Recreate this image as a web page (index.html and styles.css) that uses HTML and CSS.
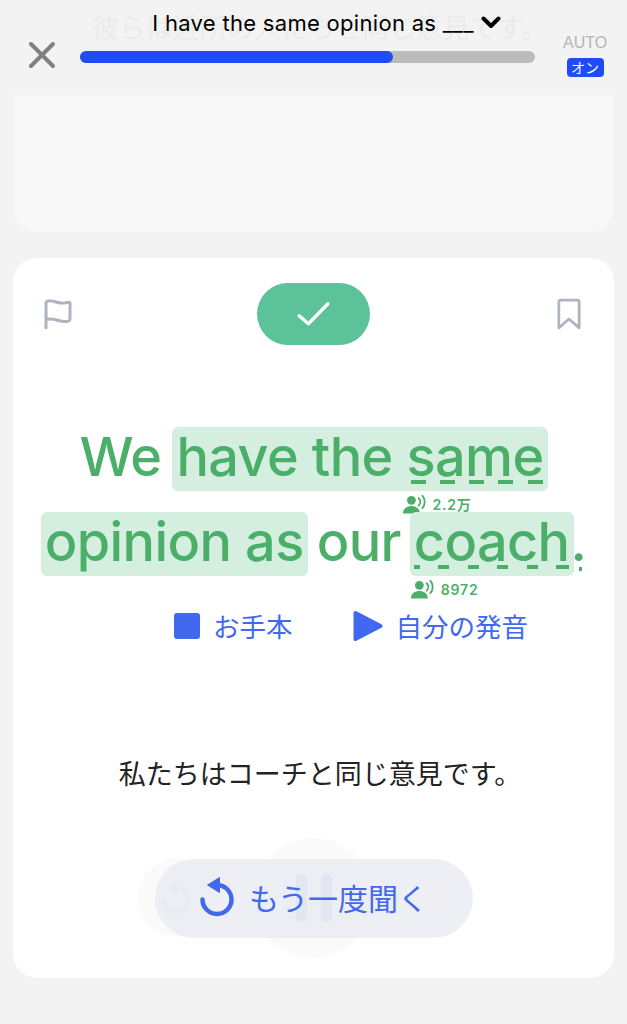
FILE: index.html
```html
<!DOCTYPE html>
<html lang="ja">
<head>
  <meta charset="UTF-8">
  <meta name="viewport" content="width=device-width, initial-scale=1.0">
  <title>Listening Lesson</title>
  <link rel="stylesheet" href="styles.css">
</head>
<body>
  <header class="top-bar">
    <p class="ghost-text">彼らは近所の人たちと同じ意見です。</p>
    <svg class="close-icon" viewBox="0 0 28 28" width="28" height="28">
      <path d="M3 3 L25 25 M25 3 L3 25" fill="none" stroke="#808080" stroke-width="4" stroke-linecap="round"/>
    </svg>
    <div class="progress-area">
      <div class="lesson-title">
        <span>I have the same opinion as ___</span>
        <svg viewBox="0 0 20 13" width="20" height="13">
          <path d="M2.5 2.5 L10 10 L17.5 2.5" fill="none" stroke="#000" stroke-width="4" stroke-linecap="round" stroke-linejoin="round"/>
        </svg>
      </div>
      <div class="progress-track"><div class="progress-fill"></div></div>
    </div>
    <div class="auto-toggle">
      <span class="auto-label">AUTO</span>
      <span class="auto-badge">オン</span>
    </div>
  </header>

  <section class="prev-card"></section>

  <main class="lesson-card">
    <div class="card-top">
      <svg viewBox="0 0 28 30" width="28" height="30">
        <path d="M2 29 V4 C2 2.5 3 2 4.5 2 C10 1 14 5 20 4 C22 3.8 26 2.5 26 4 V20 C26 22 24 22.5 21 22.5 C15 22.5 9 18.5 2 20.5" fill="none" stroke="#aeb4bf" stroke-width="3" stroke-linecap="round" stroke-linejoin="round"/>
      </svg>
      <div class="check-pill">
        <svg viewBox="0 0 38 28" width="36" height="26">
          <path d="M3 16 L13 24.5 L34 3" fill="none" stroke="#fff" stroke-width="3.6" stroke-linecap="round" stroke-linejoin="round"/>
        </svg>
      </div>
      <svg viewBox="0 0 26 34" width="24" height="32">
        <path d="M2 32 V4 C2 2.7 2.7 2 4 2 H22 C23.3 2 24 2.7 24 4 V32 L13 22.5 Z" fill="none" stroke="#aeb4bf" stroke-width="3" stroke-linejoin="round"/>
      </svg>
    </div>

    <div class="sentence">
      <div class="sentence-line">
        <span class="word-first">We</span>
        <span class="word-hl">have the <span class="word-scored">same
          <span class="dashes"><i></i><i></i><i></i><i></i><i></i></span>
          <span class="score score-same">
            <svg viewBox="0 0 22 18" width="23" height="19">
              <circle cx="8" cy="5" r="4.2" fill="#4caf69"/>
              <path d="M0 17.5 C0 12.5 4 10.5 8 10.5 C12 10.5 16 12.5 16 17.5 Z" fill="#4caf69"/>
              <path d="M15 3 C17 5 17 8 15 10 M18.5 0.5 C21.5 4 21.5 9 18.5 12.5" fill="none" stroke="#4caf69" stroke-width="1.8" stroke-linecap="round"/>
            </svg>
            2.2万
          </span>
        </span></span>
      </div>
      <div class="sentence-line">
        <span class="word-hl">opinion as</span>
        <span>our</span>
        <span class="word-end"><span class="word-hl"><span class="word-scored">coach
          <span class="dashes dashes-coach"><i></i><i></i><i></i><i></i><i></i><i></i></span>
        </span></span><span class="word-dot">.</span>
          <span class="score score-coach">
            <svg viewBox="0 0 22 18" width="23" height="19">
              <circle cx="8" cy="5" r="4.2" fill="#4caf69"/>
              <path d="M0 17.5 C0 12.5 4 10.5 8 10.5 C12 10.5 16 12.5 16 17.5 Z" fill="#4caf69"/>
              <path d="M15 3 C17 5 17 8 15 10 M18.5 0.5 C21.5 4 21.5 9 18.5 12.5" fill="none" stroke="#4caf69" stroke-width="1.8" stroke-linecap="round"/>
            </svg>
            8972
          </span>
        </span>
      </div>
    </div>

    <div class="audio-row">
      <div class="audio-btn">
        <span class="stop-icon"></span>
        <span>お手本</span>
      </div>
      <div class="audio-btn">
        <svg viewBox="0 0 30 32" width="30" height="32">
          <path d="M2.5 3 L27.5 16 L2.5 29 Z" fill="#4169f0" stroke="#4169f0" stroke-width="4" stroke-linejoin="round"/>
        </svg>
        <span>自分の発音</span>
      </div>
    </div>

    <p class="translation">私たちはコーチと同じ意見です。</p>

    <div class="controls">
      <span class="ghost-circle"></span>
      <span class="ghost-replay">
        <svg viewBox="0 0 34 40" width="30" height="38">
          <path d="M17 7 A14 14 0 1 1 4 20" fill="none" stroke="#e6ebf5" stroke-width="4" stroke-linecap="round"/>
          <path d="M19 0 L8 7 L19 14 Z" fill="#e6ebf5"/>
        </svg>
      </span>
      <span class="ghost-big"></span>
      <button class="again-btn">
        <svg viewBox="0 0 34 40" width="34" height="40">
          <path d="M17 8 A14.5 14.5 0 1 1 2.5 22.5" fill="none" stroke="#4169f0" stroke-width="4.5" stroke-linecap="round"/>
          <path d="M19.5 0.5 L7.5 8 L19.5 15.5 Z" fill="#4169f0" stroke="#4169f0" stroke-width="1" stroke-linejoin="round"/>
        </svg>
        <span>もう一度聞く</span>
      </button>
      <span class="pause-bars"><i></i><i></i></span>
    </div>
  </main>
</body>
</html>
```

FILE: styles.css
```css
* {
  box-sizing: border-box;
}

body {
  margin: 0;
  height: 1024px;
  overflow: hidden;
  background-color: #f3f3f3;
  font-family: Inter, "Noto Sans CJK JP", sans-serif;
  color: #222;
}

/* header */
.top-bar {
  position: relative;
  height: 95px;
  display: flex;
  padding: 12px 19px 0 28px;
}

.ghost-text {
  position: absolute;
  left: 92px;
  top: 8px;
  margin: 0;
  font-size: 27px;
  line-height: 38px;
  color: #ebebeb;
  font-family: "Noto Sans CJK JP", sans-serif;
}

.close-icon {
  margin-top: 29px;
  flex-shrink: 0;
}

.progress-area {
  position: relative;
  width: 455px;
  margin-left: 24px;
}

.lesson-title {
  display: flex;
  align-items: center;
  justify-content: center;
  gap: 7px;
  height: 22px;
  padding-left: 38px;
  font-size: 22px;
  letter-spacing: 0.3px;
  color: #000;
  white-space: nowrap;
}

.lesson-title svg {
  margin-top: -1px;
}

.progress-track {
  height: 12px;
  margin-top: 17px;
  background-color: #bcbcbc;
  border-radius: 6px;
}

.progress-fill {
  width: 313px;
  height: 12px;
  background-color: #1f4df5;
  border-radius: 6px;
}

.auto-toggle {
  display: flex;
  flex-direction: column;
  align-items: center;
  margin-left: 28px;
  padding-top: 22px;
}

.auto-label {
  font-size: 16px;
  line-height: 18px;
  color: #b5b5b5;
  font-family: "Liberation Sans", sans-serif;
}

.auto-badge {
  width: 37px;
  height: 19px;
  margin-top: 6px;
  background-color: #1f4df5;
  border-radius: 4px;
  color: #fff;
  font-size: 14px;
  line-height: 19px;
  text-align: center;
  font-family: "Noto Sans CJK JP", sans-serif;
}

/* cards */
.prev-card {
  height: 137px;
  margin: 0 13px;
  background-color: #f8f8f8;
  border-radius: 0 0 24px 24px;
}

.lesson-card {
  height: 720px;
  margin: 26px 13px 0;
  padding-top: 25px;
  background-color: #fff;
  border-radius: 24px;
}

.card-top {
  display: flex;
  align-items: center;
  justify-content: space-between;
  height: 62px;
  padding: 0 33px 0 31px;
}

.check-pill {
  display: flex;
  align-items: center;
  justify-content: center;
  width: 113px;
  height: 62px;
  margin-right: 2px;
  background-color: #5bc299;
  border-radius: 31px;
}

/* sentence */
.sentence {
  display: flex;
  flex-direction: column;
  gap: 21px;
  margin-top: 82px;
  font-size: 54px;
  font-weight: 500;
  letter-spacing: -0.6px;
  line-height: 60px;
  color: #4caf69;
}

.sentence-line {
  display: flex;
  justify-content: center;
  gap: 9px;
  white-space: nowrap;
}

.word-first {
  margin-right: 2px;
}

.word-hl {
  display: inline-block;
  padding: 0 4px 4px;
  background-color: #d4eee0;
  border-radius: 6px;
}

.word-scored {
  position: relative;
  display: inline-block;
}

.word-end {
  position: relative;
}

.word-dot {
  position: relative;
  margin-left: -3px;
}

/* tail of the last dash, past the period */
.word-dot::after {
  content: "";
  position: absolute;
  left: 8px;
  bottom: 3px;
  width: 3px;
  height: 4px;
  background-color: #4caf69;
}

.dashes {
  position: absolute;
  left: 4px;
  right: 1px;
  bottom: 3px;
  display: flex;
  justify-content: space-between;
}

.dashes i {
  width: 15px;
  height: 4px;
  background-color: #4caf69;
}

.dashes-coach {
  left: 0;
  right: 0;
}

.dashes-coach i {
  width: 11px;
}

.dashes-coach i:first-child {
  width: 6px;
}

.dashes-coach i:last-child {
  width: 13px;
}

.score {
  position: absolute;
  display: flex;
  align-items: center;
  gap: 7px;
  font-size: 14px;
  line-height: 14px;
  font-weight: 600;
  letter-spacing: 0.8px;
}

.score-same {
  left: -4px;
  top: 68px;
}

.score-coach {
  left: 1px;
  top: 68px;
}

/* audio buttons */
.audio-row {
  display: flex;
  justify-content: center;
  gap: 60px;
  margin-top: 34px;
  padding-left: 75px;
  color: #4169f0;
  font-size: 26.5px;
  line-height: 32px;
  font-family: "Noto Sans CJK JP", sans-serif;
}

.audio-btn {
  display: flex;
  align-items: center;
  gap: 13px;
}

.stop-icon {
  width: 26px;
  height: 26px;
  background-color: #4169f0;
  border-radius: 3px;
}

.translation {
  margin: 112px 0 0;
  padding-left: 13px;
  text-align: center;
  font-size: 27px;
  line-height: 38px;
  color: #222;
  font-family: "Noto Sans CJK JP", sans-serif;
}

/* bottom controls */
.controls {
  position: relative;
  display: flex;
  justify-content: center;
  margin-top: 67px;
  padding-left: 1px;
}

.ghost-circle {
  position: absolute;
  left: 125px;
  top: 0;
  width: 78px;
  height: 78px;
  background-color: #fafafb;
  border-radius: 50%;
}

.ghost-replay {
  position: absolute;
  left: 147px;
  top: 21px;
}

.ghost-big {
  position: absolute;
  left: 240px;
  top: -21px;
  width: 120px;
  height: 120px;
  background-color: #fafafb;
  border-radius: 50%;
}

.again-btn {
  position: relative;
  display: flex;
  align-items: center;
  justify-content: center;
  gap: 15px;
  width: 318px;
  height: 79px;
  padding: 0 0 4px;
  border: none;
  background-color: rgba(232, 235, 242, 0.8);
  border-radius: 40px;
  color: #4169f0;
  font-size: 30px;
  font-family: "Noto Sans CJK JP", sans-serif;
}

.pause-bars {
  position: absolute;
  left: 283px;
  top: 15px;
  display: flex;
  gap: 14px;
}

.pause-bars i {
  width: 11px;
  height: 48px;
  background-color: rgba(65, 105, 240, 0.06);
  border-radius: 5px;
}
```
